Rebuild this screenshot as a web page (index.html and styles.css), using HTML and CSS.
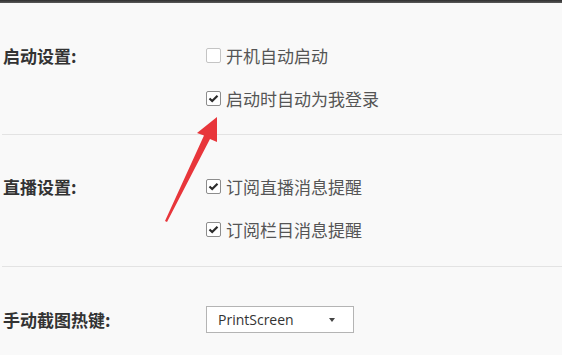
FILE: index.html
```html
<!DOCTYPE html>
<html>
    <head>
        <title>设置</title>
        <link rel="stylesheet" href="styles.css">
    </head>
    <body>
        <div class="topbar"></div>
        <div id="settings">
            <div class="section first">
                <div class="label">启动设置:</div>
                <div class="options">
                    <div class="option">
                        <span class="box"></span>开机自动启动
                    </div>
                    <div class="option">
                        <span class="box on"><svg width="13" height="13" viewBox="0 0 13 13"><path d="M2.5 6.5 L5.2 9 L10.5 3.8" fill="none" stroke="#2b2b2b" stroke-width="2.2"/></svg></span>启动时自动为我登录
                    </div>
                </div>
            </div>
            <div class="section second">
                <div class="label">直播设置:</div>
                <div class="options">
                    <div class="option">
                        <span class="box on"><svg width="13" height="13" viewBox="0 0 13 13"><path d="M2.5 6.5 L5.2 9 L10.5 3.8" fill="none" stroke="#2b2b2b" stroke-width="2.2"/></svg></span>订阅直播消息提醒
                    </div>
                    <div class="option">
                        <span class="box on"><svg width="13" height="13" viewBox="0 0 13 13"><path d="M2.5 6.5 L5.2 9 L10.5 3.8" fill="none" stroke="#2b2b2b" stroke-width="2.2"/></svg></span>订阅栏目消息提醒
                    </div>
                </div>
            </div>
            <div class="section third">
                <div class="label">手动截图热键:</div>
                <div class="options">
                    <div class="select">
                        <span>PrintScreen</span>
                        <span class="caret"></span>
                    </div>
                </div>
            </div>
        </div>
        <!-- red annotation arrow -->
        <svg class="arrow" width="562" height="355" viewBox="0 0 562 355">
            <polygon points="165,221 204,135.5 197,133 217,117 217,142 210,139 167,222" fill="#e8363b"/>
        </svg>
    </body>
</html>
```

FILE: styles.css
```css
body{margin:0px; padding:0px; background:#f9f9f9; font-family:"Noto Sans CJK SC", "Noto Sans", sans-serif;}
body,html{height:100%; width:100%; overflow:hidden;}
.topbar{height:3px; background:linear-gradient(#2e2e2e, #5a5a5a);}
.section{display:flex; align-items:flex-start; margin-left:2px;}
.first{padding-top:31px; padding-bottom:14px; border-bottom:1px solid #e3e3e3;}
.second{padding-top:30px; padding-bottom:15px; border-bottom:1px solid #e3e3e3;}
.third{padding-top:39px;}
.label{width:203px; padding-left:1px; line-height:43px; font-size:17px; font-weight:bold; color:#333;}
.third .label{line-height:27px;}
.option{display:flex; align-items:center; height:43px; font-size:17px; color:#555;}
.box{width:13px; height:13px; border:1px solid #c4c4c4; border-radius:2px; background:#fff; margin-right:5px; display:flex; align-items:center; justify-content:center;}
.box.on{border-color:#8d8d8d;}
.select{display:flex; align-items:center; justify-content:space-between; box-sizing:border-box; width:148px; height:27px; border:1px solid #b4b4b4; background:#fff; padding:0 18px 0 11px; font-family:"Open Sans", sans-serif; font-size:14px; color:#333;}
.caret{width:0; height:0; border-left:3.5px solid transparent; border-right:3.5px solid transparent; border-top:4px solid #444;}
.arrow{position:absolute; left:0; top:0; pointer-events:none;}
```
